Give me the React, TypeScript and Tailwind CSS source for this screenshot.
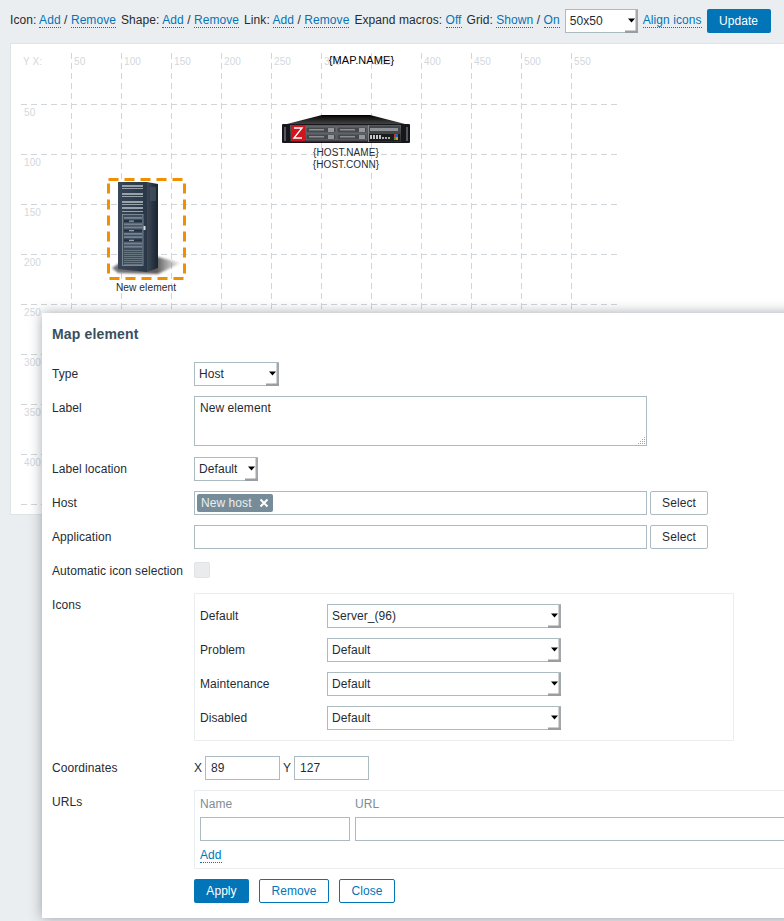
import React from "react";

const A = ({ children }: { children: React.ReactNode }) => (
  <a className="text-[#0275b8] border-b border-dotted border-[#0275b8] cursor-pointer">{children}</a>
);

const Sel = ({ value, w }: { value: string; w: string }) => (
  <div className={`relative h-6 shrink-0 ${w}`}>
    <select
      defaultValue={value}
      className="appearance-none block w-full h-full bg-white border border-[#acbbc2] pl-[4px] text-[12px] text-[#1f2c33] outline-none"
    >
      <option>{value}</option>
    </select>
    <svg className="absolute right-0 bottom-0 pointer-events-none" width="14" height="24" viewBox="0 0 14 24">
      <rect x="11.5" y="1" width="2.5" height="23" fill="#a4a8aa" />
      <rect x="1" y="21.5" width="13" height="2.5" fill="#9a9ea0" />
      <polygon points="4,9.5 11,9.5 7.5,13.5" fill="#000" />
    </svg>
  </div>
);

const Row = ({ label, children, cls = "" }: { label: string; children: React.ReactNode; cls?: string }) => (
  <div className={`flex items-start ${cls}`}>
    <div className="w-[142px] shrink-0 pt-[5px] leading-[14px] text-[#1f2c33]">{label}</div>
    {children}
  </div>
);

const Input = ({ w, value = "" }: { w: string; value?: string }) => (
  <input
    readOnly
    value={value}
    className={`block h-6 shrink-0 bg-white border border-[#acbbc2] px-[5px] text-[12px] text-[#1f2c33] outline-none ${w}`}
  />
);

const SelectBtn = () => (
  <button className="ml-[3px] w-[58px] h-6 bg-white border border-[#acbbc2] rounded-[2px] text-[12px] text-[#1f2c33]">
    Select
  </button>
);

const IconRow = ({ label, value }: { label: string; value: string }) => (
  <div className="flex items-center h-6">
    <div className="w-[127px] shrink-0 text-[#1f2c33]">{label}</div>
    <Sel value={value} w="w-[234px]" />
  </div>
);

const xs = [50, 100, 150, 200, 250, 300, 350, 400, 450, 500, 550];
const ys = [50, 100, 150, 200, 250, 300, 350, 400, 450];

const Grid = () => (
  <g>
    {xs.map((v) => (
      <g key={v}>
        <line x1={v + 21.5} x2={v + 21.5} y1="53" y2="504" stroke="#d0d5d9" strokeDasharray="6 4" />
        <text x={v + 24} y="65" fontSize="10" fill="#d3d8dc">{v}</text>
      </g>
    ))}
    {ys.map((v) => (
      <g key={v}>
        <line x1="21" x2="618" y1={v + 54.5} y2={v + 54.5} stroke="#d0d5d9" strokeDasharray="6 4" />
        {v < 450 && <text x="24" y={v + 66} fontSize="10" fill="#d3d8dc">{v}</text>}
      </g>
    ))}
    <text x="23" y="65" fontSize="10" fill="#d3d8dc">Y X:</text>
  </g>
);

const Server = () => (
  <g filter="url(#soft)">
    <defs>
      <linearGradient id="srvTop" x1="0" y1="0" x2="0" y2="1">
        <stop offset="0" stopColor="#000" />
        <stop offset="1" stopColor="#4a4a4a" />
      </linearGradient>
      <linearGradient id="srvBody" x1="0" y1="0" x2="0" y2="1">
        <stop offset="0" stopColor="#5a5c5e" />
        <stop offset="1" stopColor="#2c2d2e" />
      </linearGradient>
      <filter id="soft" x="-5%" y="-5%" width="110%" height="110%">
        <feGaussianBlur stdDeviation="0.3" />
      </filter>
    </defs>
    <polygon points="322,115 370,115 409,125 283,125" fill="url(#srvTop)" />
    <rect x="282" y="124" width="128" height="19" rx="1" fill="#17181a" />
    <rect x="284" y="127" width="2" height="14" fill="#55585a" />
    <rect x="406" y="127" width="2" height="14" fill="#55585a" />
    <rect x="290" y="125" width="111" height="17" fill="url(#srvBody)" />
    <rect x="291" y="125" width="14" height="16" fill="#d0121a" />
    <polyline points="294,128 302,128 294,138 302,138" fill="none" stroke="#fff" strokeWidth="1.4" />
    {[306, 337].flatMap((x) =>
      [127, 134].map((y) => (
        <g key={`${x}-${y}`}>
          <rect x={x} y={y} width="30" height="6" fill="#45484c" stroke="#797d81" strokeWidth="0.7" />
          <rect x={x + 3} y={y + 2} width="15" height="1.5" fill="#8a8e92" />
          <rect x={x + 22} y={y + 1} width="6" height="4" fill="#94989c" />
        </g>
      ))
    )}
    <rect x="368" y="125" width="1" height="17" fill="#888" />
    <rect x="369" y="126" width="31" height="7" fill="#43464a" />
    <rect x="370" y="128" width="28" height="3" fill="#8e9296" />
    <rect x="369" y="134" width="31" height="7" fill="#1c1d1f" />
    {[370, 373, 376, 379].map((x) => (
      <rect key={x} x={x} y="135" width="2" height="4" fill="#c4c8cc" />
    ))}
    {[382, 385, 388].map((x) => (
      <rect key={x} x={x} y="137" width="2" height="2" fill="#a8acb0" />
    ))}
    <rect x="394" y="134" width="2" height="3" fill="#c83020" />
    <rect x="396" y="134" width="2" height="3" fill="#2860c0" />
    <rect x="394" y="137" width="2" height="3" fill="#30a040" />
    <rect x="396" y="137" width="2" height="3" fill="#d09020" />
  </g>
);

const Tower = () => (
  <g>
    <defs>
      <linearGradient id="twSide" x1="0" y1="0" x2="1" y2="0">
        <stop offset="0" stopColor="#3a4756" />
        <stop offset="1" stopColor="#1a2430" />
      </linearGradient>
      <linearGradient id="twFront" x1="0" y1="0" x2="1" y2="0">
        <stop offset="0" stopColor="#38465a" />
        <stop offset="1" stopColor="#2a3746" />
      </linearGradient>
      <linearGradient id="twShadow" x1="0" y1="0" x2="1" y2="0">
        <stop offset="0" stopColor="#555" stopOpacity="0.8" />
        <stop offset="0.65" stopColor="#333" stopOpacity="0.8" />
        <stop offset="1" stopColor="#777" stopOpacity="0.1" />
      </linearGradient>
      <filter id="twBlur" x="-20%" y="-50%" width="140%" height="200%">
        <feGaussianBlur stdDeviation="1.2" />
      </filter>
      <filter id="twSoft" x="-5%" y="-5%" width="110%" height="110%">
        <feGaussianBlur stdDeviation="0.4" />
      </filter>
    </defs>
    <polygon points="112,268 118,273 158,274 181,263 158,257 118,264" fill="url(#twShadow)" filter="url(#twBlur)" />
    <g filter="url(#twSoft)">
      <polygon points="147,182 158,184 158,268 147,272" fill="url(#twSide)" />
      <polygon points="118,182 147,182 147,272 118,269" fill="url(#twFront)" />
      {[185, 188, 193, 196, 201, 204, 207, 211].map((y, i) => (
        <rect key={y} x="122" y={y} width="21" height={i % 2 ? 1 : 2} fill="#98a2aa" />
      ))}
      <rect x="122.5" y="214.5" width="20.5" height="51" fill="#3e4e60" stroke="#8a96a0" strokeWidth="0.8" />
      {Array.from({ length: 10 }, (_, i) => 217 + i * 3.2).map((y, i) => (
        <g key={i}>
          <rect x="124" y={y} width="18" height="1.8" fill={i % 3 === 1 ? "#222d3a" : "#76838e"} />
          {i % 3 === 1 && <rect x="129" y={y + 0.4} width="5" height="1" fill="#b4bcc2" />}
        </g>
      ))}
      {Array.from({ length: 8 }, (_, i) => 250 + i * 2).map((y) => (
        <rect key={y} x="124" y={y} width="18" height="1" fill="#66747f" />
      ))}
      <rect x="143.5" y="226" width="2" height="4" fill="#d8dcdf" />
      <rect x="150" y="187" width="6" height="14" fill="#465363" opacity="0.7" />
    </g>
  </g>
);

export default function App() {
  return (
    <div className="relative h-[921px] w-full overflow-hidden bg-[#ebeef0] text-[12px] tracking-[0.07px] text-[#1f2c33] [font-family:'Liberation_Sans',Arial,sans-serif]">
      {/* toolbar */}
      <div className="flex items-start gap-[5px] h-[43px] pl-[10px] pt-[9px] whitespace-pre leading-[22px]">
        <span>Icon: <A>Add</A> / <A>Remove</A></span>
        <span>Shape: <A>Add</A> / <A>Remove</A></span>
        <span>Link: <A>Add</A> / <A>Remove</A></span>
        <span>Expand macros: <A>Off</A></span>
        <span>Grid: <A>Shown</A> / <A>On</A></span>
        <Sel value="50x50" w="w-[73px]" />
        <span><A>Align icons</A></span>
        <button className="w-16 h-6 bg-[#0275b8] rounded-[2px] text-white text-[12px]">Update</button>
      </div>

      {/* map canvas */}
      <div className="ml-[10px] h-[472px] bg-white border border-r-0 border-[#dfe4e7]">
        <svg width="773" height="470" viewBox="11 44 773 470" className="block">
          <Grid />
          <text x="361.5" y="64" fontSize="11" fill="#000" textAnchor="middle">{"{MAP.NAME}"}</text>
          <Server />
          <text x="346" y="156" fontSize="10" fill="#1f2c33" textAnchor="middle">{"{HOST.NAME}"}</text>
          <text x="346" y="168" fontSize="10" fill="#1f2c33" textAnchor="middle">{"{HOST.CONN}"}</text>
          <Tower />
          <rect x="108.5" y="179.5" width="76" height="99" fill="none" stroke="#f09000" strokeWidth="3" strokeDasharray="10 6" />
          <text x="146" y="291" fontSize="10.2" fill="#1f2c33" textAnchor="middle">New element</text>
        </svg>
      </div>

      {/* dialog */}
      <div className="absolute left-[42px] top-[313px] w-[760px] h-[605px] bg-white pl-[10px] shadow-[0_0_12px_rgba(50,60,70,0.45)]">
        <div className="pt-[13px] h-[49px] text-[14px] leading-4 font-bold tracking-[0.15px] text-[#3a4e5e]">Map element</div>
        <div className="flex flex-col">
          <Row label="Type"><Sel value="Host" w="w-[85px]" /></Row>
          <Row label="Label" cls="mt-[10px]">
            <div className="relative w-[453px] h-[50px]">
              <textarea
                readOnly
                defaultValue="New element"
                className="block w-full h-full resize-none bg-white border border-[#acbbc2] px-[5px] py-[4px] leading-[14px] text-[12px] text-[#1f2c33] outline-none"
              />
              <svg className="absolute right-[1px] bottom-[1px] pointer-events-none" width="9" height="9" viewBox="0 0 9 9">
                <path
                  d="M7 1h1v1H7zM7 3h1v1H7zM5 3h1v1H5zM7 5h1v1H7zM5 5h1v1H5zM3 5h1v1H3zM7 7h1v1H7zM5 7h1v1H5zM3 7h1v1H3zM1 7h1v1H1z"
                  fill="#9aa4aa"
                />
              </svg>
            </div>
          </Row>
          <Row label="Label location" cls="mt-[11px]"><Sel value="Default" w="w-[64px]" /></Row>
          <Row label="Host" cls="mt-[10px]">
            <div className="flex items-center w-[453px] h-6 bg-white border border-[#acbbc2] pl-[2px]">
              <div className="flex items-center h-[18px] w-[76px] pl-[4px] bg-[#768d99] rounded-[2px] text-[#ebeef0]">
                <span>New host</span>
                <svg className="ml-[7px]" width="10" height="10" viewBox="0 0 10 10">
                  <path d="M1.5 1.5 L8.5 8.5 M8.5 1.5 L1.5 8.5" stroke="#ffffff" strokeWidth="2" fill="none" />
                </svg>
              </div>
            </div>
            <SelectBtn />
          </Row>
          <Row label="Application" cls="mt-[10px]"><Input w="w-[453px]" /><SelectBtn /></Row>
          <Row label="Automatic icon selection" cls="mt-[10px] h-6">
            <div className="mt-[3px] w-4 h-4 bg-[#ebebeb] border border-[#dfe4e7] rounded-[2px]" />
          </Row>
          <Row label="Icons" cls="mt-[10px]">
            <div className="flex flex-col gap-[10px] w-[540px] border border-[#ebeef0] pl-[5px] py-[10px]">
              <IconRow label="Default" value="Server_(96)" />
              <IconRow label="Problem" value="Default" />
              <IconRow label="Maintenance" value="Default" />
              <IconRow label="Disabled" value="Default" />
            </div>
          </Row>
          <Row label="Coordinates" cls="mt-[15px]">
            <div className="flex items-center">
              <span className="w-[11px]">X</span>
              <Input w="w-[75px]" value="89" />
              <span className="w-[14px] pl-[3px]">Y</span>
              <Input w="w-[75px]" value="127" />
            </div>
          </Row>
          <Row label="URLs" cls="mt-[10px]">
            <div className="w-[640px] h-[79px] border border-[#ebeef0] pl-[5px] pt-[6px]">
              <div className="flex h-[14px] leading-[14px] text-[#7e8d96]">
                <span className="w-[155px]">Name</span>
                <span>URL</span>
              </div>
              <div className="flex gap-[5px] mt-[6px]">
                <Input w="w-[150px]" />
                <Input w="w-[450px]" />
              </div>
              <div className="mt-[7px] leading-[14px]"><A>Add</A></div>
            </div>
          </Row>
          <div className="flex gap-[10px] mt-[10px] ml-[142px]">
            <button className="w-[55px] h-6 bg-[#0275b8] rounded-[2px] text-white text-[12px]">Apply</button>
            <button className="w-[70px] h-6 bg-white border border-[#0275b8] rounded-[2px] text-[#0275b8] text-[12px]">Remove</button>
            <button className="w-[56px] h-6 bg-white border border-[#0275b8] rounded-[2px] text-[#0275b8] text-[12px]">Close</button>
          </div>
        </div>
      </div>
    </div>
  );
}
